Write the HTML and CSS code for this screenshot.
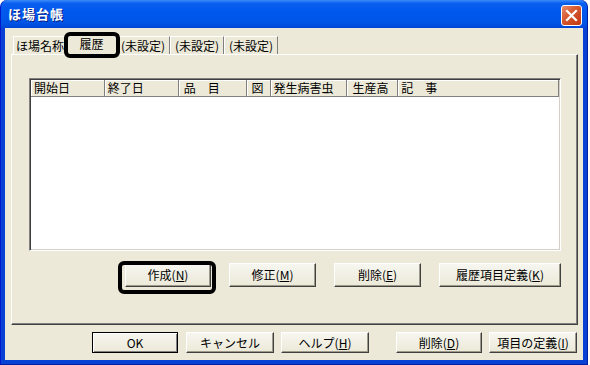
FILE: index.html
```html
<!DOCTYPE html>
<html lang="ja">
<head>
    <meta charset="UTF-8">
    <title>ほ場台帳</title>
    <link rel="stylesheet" href="styles.css">
</head>
<body>
    <div class="window">
        <div class="titlebar">
            <span class="title">ほ場台帳</span>
            <span class="close-btn">
                <svg width="13" height="13" viewBox="0 0 13 13">
                    <path d="M2 2 L11 11 M11 2 L2 11" stroke="#fff" stroke-width="2.2" stroke-linecap="square"/>
                </svg>
            </span>
        </div>

        <div class="client">
            <div class="tabs">
                <div class="tab tab-name">ほ場名称</div>
                <div class="tab tab-active">履歴<span class="mark mark-tab"></span></div>
                <div class="tab tab-unset">(未設定)</div>
                <div class="tab tab-unset">(未設定)</div>
                <div class="tab tab-unset">(未設定)</div>
            </div>

            <div class="panel">
                <div class="listview">
                    <div class="list-header">
                        <div class="col col-start">開始日</div>
                        <div class="col col-end">終了日</div>
                        <div class="col col-item">品　目</div>
                        <div class="col col-fig">図</div>
                        <div class="col col-pest">発生病害虫</div>
                        <div class="col col-yield">生産高</div>
                        <div class="col col-note">記　事</div>
                    </div>
                    <div class="list-body"></div>
                </div>

                <div class="panel-buttons">
                    <button class="btn btn-create">作成(<u>N</u>)<span class="mark mark-btn"></span></button>
                    <button class="btn btn-edit">修正(<u>M</u>)</button>
                    <button class="btn btn-del">削除(<u>E</u>)</button>
                    <button class="btn btn-def">履歴項目定義(<u>K</u>)</button>
                </div>
            </div>

            <div class="footer-buttons">
                <button class="btn btn-ok">OK</button>
                <button class="btn btn-foot">キャンセル</button>
                <button class="btn btn-foot">ヘルプ(<u>H</u>)</button>
                <button class="btn btn-foot btn-foot-del">削除(<u>D</u>)</button>
                <button class="btn btn-foot">項目の定義(<u>I</u>)</button>
            </div>
        </div>
    </div>
</body>
</html>
```

FILE: styles.css
```css
body {
    margin: 0;
    background: #fff;
    font-family: "Noto Sans CJK JP", "Noto Sans", sans-serif;
    font-size: 12px;
    color: #000;
}

.window {
    width: 588px;
    height: 365px;
    box-sizing: border-box;
    display: flex;
    flex-direction: column;
    background: #0842D4;
    border-radius: 7px 7px 0 0;
    padding: 0 4px 4px 4px;
    border-left: 1px solid #0019CF;
    border-right: 1px solid #001EA0;
    border-bottom: 1px solid #001EA0;
}

.titlebar {
    height: 29px;
    margin: 0 -4px;
    padding: 0 5px 0 7px;
    display: flex;
    align-items: center;
    justify-content: space-between;
    background: linear-gradient(#3C8CF8 0%, #0A5FEF 12%, #0058EE 40%, #0055E6 80%, #0046D8 100%);
    border-radius: 7px 7px 0 0;
}

.title {
    color: #fff;
    font-weight: bold;
    font-size: 13px;
    letter-spacing: 1px;
    text-shadow: 1px 1px #0A1E80;
    margin-top: -1px;
}

.close-btn {
    width: 21px;
    height: 21px;
    box-sizing: border-box;
    border: 1px solid #fff;
    border-radius: 3px;
    background: linear-gradient(135deg, #E88A6C 0%, #D5572E 45%, #C2380F 100%);
    display: flex;
    align-items: center;
    justify-content: center;
    margin-top: 2px;
}

.client {
    flex: 1;
    background: #ECE9D8;
    padding: 0 5px 7px 6px;
    display: flex;
    flex-direction: column;
}

/* tabs */
.tabs {
    height: 26px;
    display: flex;
    align-items: flex-end;
    padding-left: 2px;
}

.tab {
    height: 18px;
    box-sizing: border-box;
    border-top: 1px solid #fff;
    border-left: 1px solid #fff;
    border-right: 1px solid #808080;
    line-height: 17px;
    text-align: center;
    background: #ECE9D8;
}

.tab-name {
    width: 54px;
}

.tab-unset {
    width: 54px;
}

.tab-active {
    position: relative;
    z-index: 1;
    width: 53px;
    height: 21px;
    margin: 0 -2px -1px -2px;
    line-height: 18px;
    box-shadow: 1px 0 #404040;
}

.mark {
    position: absolute;
    border: 4px solid #000;
    border-radius: 6px;
    pointer-events: none;
}

.mark-tab {
    top: -3px;
    bottom: -3px;
    left: -2px;
    right: -3px;
}

/* panel */
.panel {
    height: 271px;
    box-sizing: border-box;
    border: 1px solid;
    border-color: #fff #404040 #404040 #fff;
    box-shadow: inset -1px -1px #808080;
    padding: 23px 16px 0 17px;
}

.listview {
    height: 173px;
    box-sizing: border-box;
    border: 1px solid;
    border-color: #808080 #fff #fff #808080;
    box-shadow: inset 1px 1px #404040, inset -1px -1px #D4D0C8;
    background: #fff;
    padding: 1px;
}

.list-header {
    display: flex;
    height: 17px;
}

.col {
    box-sizing: border-box;
    height: 17px;
    padding-left: 3px;
    line-height: 16px;
    background: #ECE9D8;
    border-right: 1px solid #808080;
    border-bottom: 1px solid #808080;
    box-shadow: inset 1px 1px #fff;
    white-space: nowrap;
}

.col-start { width: 74px; }
.col-end { width: 74px; }
.col-item { width: 68px; padding-left: 5px; }
.col-fig { width: 24px; padding-left: 5px; }
.col-pest { width: 77px; }
.col-yield { width: 51px; padding-left: 5px; }
.col-note { width: 161px; }

/* buttons */
.btn {
    font-family: inherit;
    font-size: 12px;
    color: #000;
    padding: 0;
    height: 24px;
    box-sizing: border-box;
    background: linear-gradient(#F7F6F0, #ECE9D8);
    border: 1px solid;
    border-color: #fff #404040 #404040 #fff;
    box-shadow: inset -1px -1px #9D9A8C;
    line-height: 20px;
}

.btn u {
    text-decoration: underline;
    text-underline-offset: 1px;
}

.panel-buttons {
    margin-top: 12px;
    display: flex;
    justify-content: flex-end;
    gap: 18px;
}

.btn-create {
    position: relative;
    width: 86px;
}

.mark-btn {
    top: -3px;
    bottom: -8px;
    left: -8px;
    right: -6px;
}

.btn-edit { width: 87px; }
.btn-del { width: 87px; }
.btn-def { width: 122px; }

.footer-buttons {
    margin-top: 7px;
    display: flex;
    justify-content: flex-end;
    gap: 7px;
    padding-right: 1px;
}

.footer-buttons .btn {
    height: 21px;
    line-height: 17px;
}

.btn-ok {
    width: 86px;
    margin-right: 1px;
    border-color: #000;
    box-shadow: inset 1px 1px #fff, inset -1px -1px #808080;
}

.btn-foot {
    width: 88px;
}

.btn-foot-del {
    width: 86px;
    margin-left: 20px;
}
```
